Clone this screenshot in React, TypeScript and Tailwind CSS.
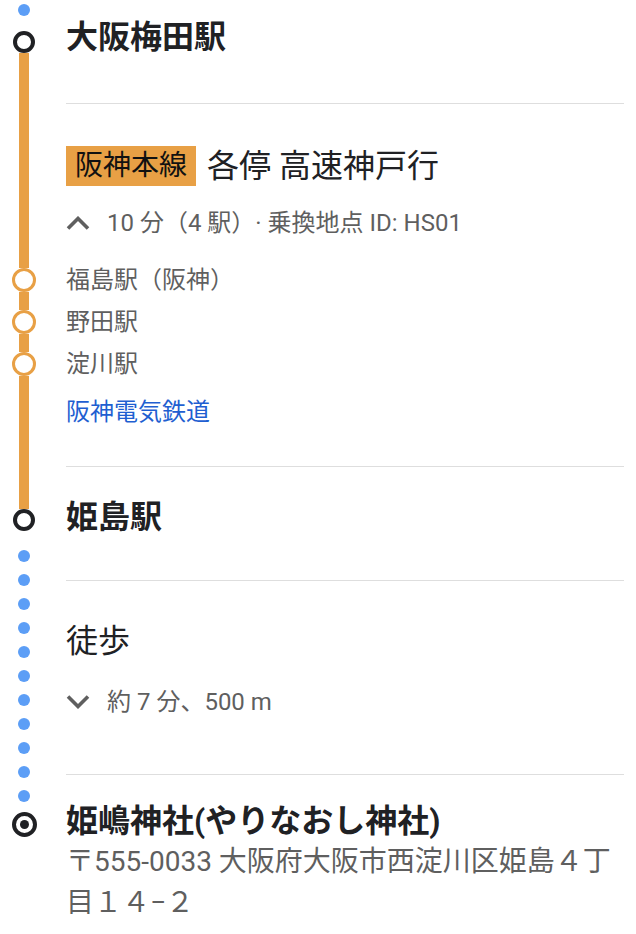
import React from "react";

const FONT = "font-['Roboto','Noto_Sans_CJK_JP',sans-serif]";

function Chevron({ up }: { up?: boolean }) {
  return (
    <svg width="24" height="14" viewBox="0 0 24 14" className="shrink-0">
      <polyline
        points={up ? "2,12.5 12,2.5 22,12.5" : "2,1.5 12,11.5 22,1.5"}
        fill="none"
        stroke="#5f5f5f"
        strokeWidth="3.6"
      />
    </svg>
  );
}

function BlueDot() {
  return <div className="h-3 w-3 shrink-0 rounded-full bg-[#5c9ef6]" />;
}

function StopCircle() {
  return <div className="h-[22px] w-[22px] shrink-0 rounded-full border-4 border-[#202124] bg-white" />;
}

function OrangeStop() {
  return <div className="h-6 w-6 shrink-0 rounded-full border-[3.5px] border-[#e8a045] bg-white" />;
}

function Timeline() {
  return (
    <div className="flex w-12 shrink-0 flex-col items-center">
      <div className="mt-[4px]">
        <BlueDot />
      </div>
      <div className="mt-[15px]">
        <StopCircle />
      </div>
      {/* 阪神本線 */}
      <div className="h-[215px] w-[10px] bg-[#e8a045]" />
      <OrangeStop />
      <div className="h-[18px] w-[10px] bg-[#e8a045]" />
      <OrangeStop />
      <div className="h-[18px] w-[10px] bg-[#e8a045]" />
      <OrangeStop />
      <div className="h-[133px] w-[10px] bg-[#e8a045]" />
      <StopCircle />
      {/* 徒歩 */}
      <div className="mt-[19px] flex flex-col items-center gap-3">
        {Array.from({ length: 11 }).map((_, i) => (
          <BlueDot key={i} />
        ))}
      </div>
      <div className="mt-[10px] flex h-[25px] w-[25px] items-center justify-center rounded-full border-4 border-[#202124]">
        <div className="h-[9px] w-[9px] rounded-full bg-[#202124]" />
      </div>
    </div>
  );
}

export default function App() {
  return (
    <div className={`flex w-[636px] bg-white text-[#202124] [text-spacing-trim:space-all] ${FONT}`}>
      <Timeline />
      <div className="flex-1 pl-[18px] pr-3">
        {/* 出発駅 */}
        <section className="border-b border-[#dedede] pt-[17px] pb-[46px]">
          <h2 className="text-[32px] font-bold leading-[40px]">大阪梅田駅</h2>
        </section>

        {/* 乗車区間 */}
        <section className="border-b border-[#dedede] pt-[42px] pb-[33px]">
          <div className="flex items-center">
            <span className="h-[40px] bg-[#e8a045] px-[9px] text-[28px] leading-[40px] text-[#111]">阪神本線</span>
            <span className="ml-[11px] text-[32px] leading-[40px]">各停 高速神戸行</span>
          </div>
          <div className="mt-[21px] flex items-center gap-[17px] text-[24px] leading-[32px] text-[#5f5f5f]">
            <Chevron up />
            <span>10 分（4 駅）· 乗換地点 ID: HS01</span>
          </div>
          <ul className="mt-[20px] text-[24px] leading-[42px] text-[#5f5f5f]">
            <li>福島駅（阪神）</li>
            <li>野田駅</li>
            <li>淀川駅</li>
          </ul>
          <a href="#" className="mt-[6px] block text-[24px] leading-[42px] text-[#1f5fd1]">
            阪神電気鉄道
          </a>
        </section>

        {/* 到着駅 */}
        <section className="border-b border-[#dedede] pt-[30px] pb-[43px]">
          <h2 className="text-[32px] font-bold leading-[40px]">姫島駅</h2>
        </section>

        {/* 徒歩 */}
        <section className="border-b border-[#dedede] pt-[40px] pb-[56px]">
          <div className="text-[32px] leading-[40px]">徒歩</div>
          <div className="mt-[25px] flex items-center gap-[17px] text-[24px] leading-[32px] text-[#5f5f5f]">
            <Chevron />
            <span>約 7 分、500 m</span>
          </div>
        </section>

        {/* 目的地 */}
        <section className="pt-[26px] pb-4">
          <h2 className="text-[32px] font-bold leading-[40px]">姫嶋神社(やりなおし神社)</h2>
          <p className="text-[28px] leading-[41px] text-[#5f5f5f]">〒555-0033 大阪府大阪市西淀川区姫島４丁目１４−２</p>
        </section>
      </div>
    </div>
  );
}
